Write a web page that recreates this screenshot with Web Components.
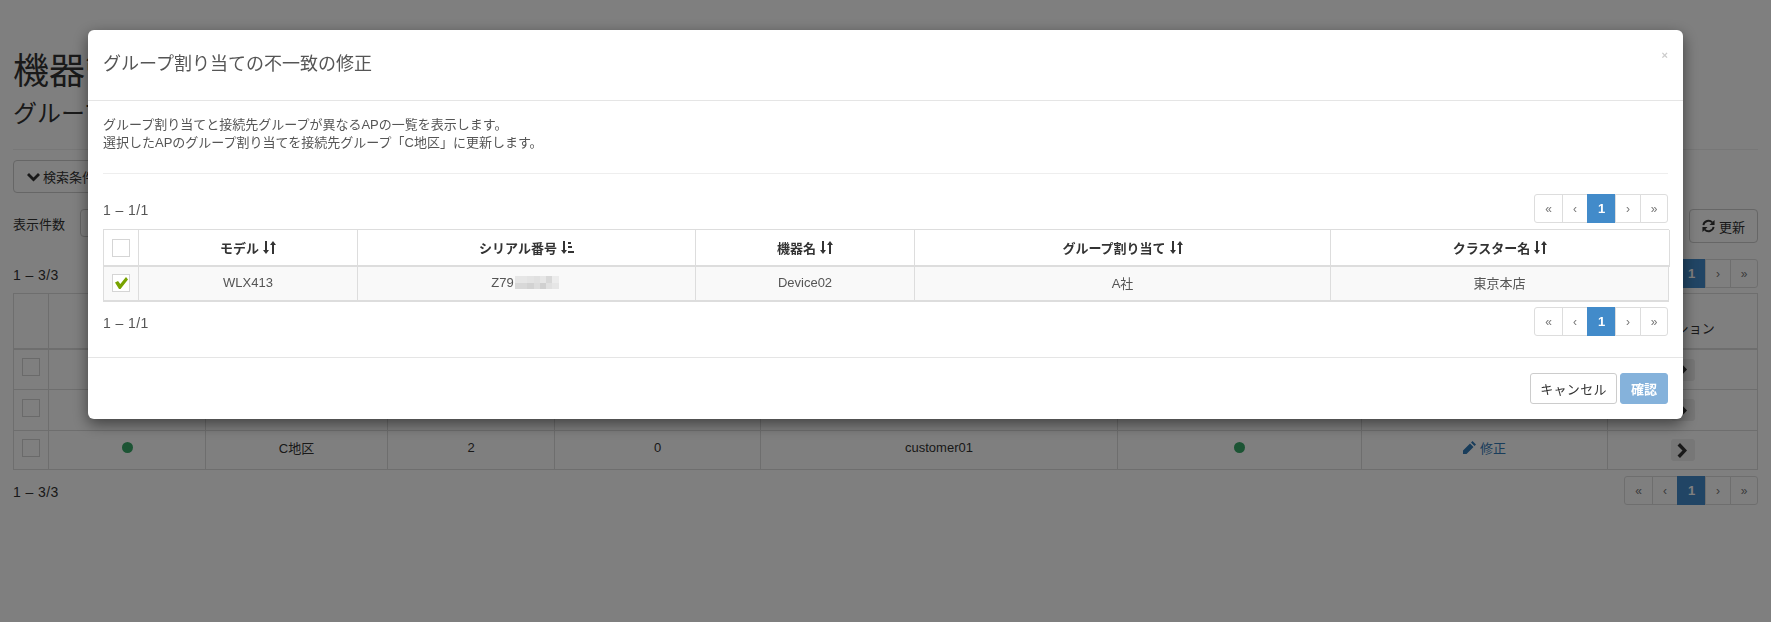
<!DOCTYPE html>
<html lang="ja">
<head>
<meta charset="utf-8">
<title>機器</title>
<style>
    html, body { margin: 0; padding: 0; background: #fff; height: 100%; overflow: hidden; }
    body { font-family: "Liberation Sans", "Noto Sans CJK JP", sans-serif; font-size: 13px; color: #333; }
</style>
</head>
<body>
<device-page></device-page>
<fix-modal></fix-modal>

<script>
const SORT_ICON = `<svg width="13" height="13" viewBox="0 0 13 13" fill="#333"><path d="M2 0h2v9h2l-3 4-3-4h2z"/><path d="M9 13h2V4h2l-3-4-3 4h2z"/></svg>`;
const SORT_ASC_ICON = `<svg width="13" height="13" viewBox="0 0 13 13" fill="#333"><path d="M2 0h2v9h2l-3 4-3-4h2z"/><path d="M7 1h3v2H7zM7 5h4v2H7zM7 10h6v2H7z"/></svg>`;
const CHEVRON_DOWN = `<svg width="13" height="10" viewBox="0 0 13 10" fill="#333"><path d="M0 3l2-2 4.500 4.500L11 1l2 2-6.500 6.500z"/></svg>`;
const CHEVRON_RIGHT = `<svg width="11" height="15" viewBox="0 0 11 15" fill="#333"><path d="M3 0l7 7.500-7 7.500-2.500-2.500 5-5-5-5z"/></svg>`;
const PENCIL = `<svg width="13" height="13" viewBox="0 0 13 13" fill="#337ab7"><path d="M9.500 0L13 3.500 11.500 5 8 1.500zM7 2.500L10.500 6 3.500 13H0V9.500z"/></svg>`;
const REFRESH = `<svg width="13" height="14" viewBox="0 0 14 14" fill="none" stroke="#333" stroke-width="2"><path d="M1.500 6A5.500 5.500 0 0 1 11 3.200"/><path d="M12.500 8A5.500 5.500 0 0 1 3 10.800"/><path d="M13.500 0.500v5.500h-5.500z" fill="#333" stroke="none"/><path d="M0.500 13.500v-5.500h5.500z" fill="#333" stroke="none"/></svg>`;

// greys of the blurred part of the serial number
const MOSAIC = ["e6", "e6", "e3", "e0", "e6", "d8", "ec", "d8", "d8", "d2", "dc", "d0", "e0", "e6"];

class PagerBar extends HTMLElement {
    connectedCallback() {
        const shadow = this.attachShadow({ mode: "open" });
        shadow.innerHTML = `
            <style>
                :host { display: inline-flex; height: 29px; }
                span { display: flex; align-items: center; justify-content: center; box-sizing: border-box; background: #fff; border: 1px solid #ddd; margin-left: -1px; color: #777; font-size: 12px; }
                .first { width: 29px; margin-left: 0; border-radius: 3px 0 0 3px; }
                .prev, .next { width: 26px; }
                .cur { width: 29px; background: #428bca; border-color: #428bca; color: #fff; font-weight: bold; font-size: 13px; }
                .last { width: 28px; border-radius: 0 3px 3px 0; }
            </style>
            <span class="first">«</span><span class="prev">‹</span><span class="cur">1</span><span class="next">›</span><span class="last">»</span>
        `;
    }
}

class TickBox extends HTMLElement {
    connectedCallback() {
        const shadow = this.attachShadow({ mode: "open" });
        const tick = this.hasAttribute("checked")
            ? `<svg width="13" height="12" viewBox="0 0 13 12"><path d="M0 5.500L3 4l2.300 3L11 0l2 2.500L5.500 12h-1.500z" fill="#78a300"/></svg>`
            : "";
        shadow.innerHTML = `
            <style>
                :host { display: inline-flex; align-items: center; justify-content: center; box-sizing: border-box; width: 18px; height: 18px; border: 1px solid #d5d5d5; background: #fff; vertical-align: middle; }
            </style>
            ${tick}
        `;
    }
}

class DevicePage extends HTMLElement {
    connectedCallback() {
        const shadow = this.attachShadow({ mode: "open" });
        const cols = "35px 157px 182px 167px 206px 357px 244px 246px 1fr";
        const dot = `<i class="dot"></i>`;
        const row = (name, count) => `
            <div class="c"><tick-box></tick-box></div><div class="c">${dot}</div><div class="c">${name}</div><div class="c">${count}</div><div class="c">0</div><div class="c">customer01</div><div class="c">${dot}</div><div class="c"><span class="link">${PENCIL}修正</span></div><div><span class="open">${CHEVRON_RIGHT}</span></div>
        `;
        shadow.innerHTML = `
            <style>
                :host { display: block; padding: 52px 13px 0 13px; color: #333; }
                h1 { font-size: 36px; font-weight: 400; line-height: 40px; margin: 0; }
                h2 { font-size: 24px; font-weight: 400; line-height: 30px; margin: 7px 0 0; }
                hr { border: 0; border-top: 1px solid #eee; margin: 20px 0 10px; }
                .search { display: inline-flex; align-items: center; gap: 3px; box-sizing: border-box; height: 33px; padding: 0 13px; border: 1px solid #ccc; border-radius: 4px; vertical-align: top; }
                .tools { display: flex; align-items: flex-start; justify-content: space-between; height: 34px; margin-top: 16px; }
                .tools .left { display: flex; align-items: center; gap: 15px; height: 28px; }
                .select { width: 80px; height: 28px; border: 1px solid #ccc; border-radius: 4px; box-sizing: border-box; }
                .update { display: inline-flex; align-items: center; gap: 4px; box-sizing: border-box; height: 34px; padding: 0 12px; border: 1px solid #ccc; border-radius: 4px; }
                .pagerow { display: flex; align-items: center; justify-content: space-between; }
                .count { font-size: 14px; letter-spacing: .4px; padding-top: 3px; }
                .pagerow.top { margin-top: 16px; }
                .pagerow.bottom { margin-top: 6px; }
                .table { display: grid; grid-template-columns: ${cols}; grid-template-rows: 56px 40px 41px 39px; border: 1px solid #ddd; border-bottom: 0; margin-top: 5px; text-align: center; }
                .table > div { display: flex; align-items: center; justify-content: center; box-sizing: border-box; border-right: 1px solid #ddd; border-bottom: 1px solid #ddd; }
                .table > div:nth-child(9n) { border-right: 0; }
                .table > .th { align-items: flex-end; padding-bottom: 11px; border-bottom-width: 2px; }
                .table > .c { padding-bottom: 5px; }
                .dot { display: block; width: 11px; height: 11px; border-radius: 50%; background: #38a868; }
                .link { color: #337ab7; display: inline-flex; gap: 4px; align-items: center; }
                .open { display: flex; align-items: center; justify-content: center; width: 24px; height: 22px; background: #eee; border-radius: 3px; }
            </style>
            <h1>機器管理</h1>
            <h2>グループ</h2>
            <hr>
            <div class="search">${CHEVRON_DOWN}検索条件</div>
            <div class="tools">
                <div class="left"><span>表示件数</span><div class="select"></div></div>
                <div class="update">${REFRESH}更新</div>
            </div>
            <div class="pagerow top"><span class="count">1 – 3/3</span><pager-bar></pager-bar></div>
            <div class="table">
                <div class="th"></div><div class="th"></div><div class="th"></div><div class="th"></div><div class="th"></div><div class="th"></div><div class="th"></div><div class="th"></div><div class="th">アクション</div>
                ${row("A地区", 1)}
                ${row("B地区", 1)}
                ${row("C地区", 2)}
            </div>
            <div class="pagerow bottom"><span class="count">1 – 3/3</span><pager-bar></pager-bar></div>
        `;
    }
}

class FixModal extends HTMLElement {
    connectedCallback() {
        const shadow = this.attachShadow({ mode: "open" });
        const mosaic = MOSAIC.map((g) => `<i style="background:#${g}${g}${g}"></i>`).join("");
        shadow.innerHTML = `
            <style>
                :host { display: block; position: fixed; inset: 0; background: rgba(0,0,0,.5); }
                .dialog { position: relative; margin: 30px 88px 0; background: #fff; border-radius: 6px; box-shadow: 0 5px 15px rgba(0,0,0,.5); color: #555; font-size: 13px; }
                header { height: 71px; box-sizing: border-box; padding: 0 15px; border-bottom: 1px solid #e5e5e5; display: flex; align-items: center; }
                header h4 { margin: 0 0 6px; font-size: 18px; font-weight: 400; color: #555; }
                .close { position: absolute; right: 15px; top: 19px; color: #ccc; font-size: 11px; font-weight: bold; }
                .body { padding: 15px; }
                .body p { margin: 0; line-height: 18px; }
                hr { border: 0; border-top: 1px solid #eee; margin: 21px 0 20px; }
                .row { display: flex; align-items: center; justify-content: space-between; }
                .count { font-size: 14px; letter-spacing: .4px; padding-top: 3px; }
                .table { display: grid; grid-template-columns: 35px 219px 338px 219px 416px 339px; margin-top: 6px; border-top: 1px solid #ddd; border-left: 1px solid #ddd; text-align: center; width: 1566px; box-sizing: border-box; }
                .table > div { display: flex; align-items: center; justify-content: center; gap: 4px; box-sizing: border-box; border-right: 1px solid #ddd; }
                .th { height: 37px; border-bottom: 2px solid #ddd; color: #333; font-weight: bold; }
                .td { height: 35px; padding-bottom: 2px; background: #f9f9f9; border-bottom: 2px solid #ddd; color: #555; }
                .td.end { margin-right: 1px; }
                .serial { display: flex; align-items: center; gap: 1px; padding-right: 3px; }
                .mosaic { display: inline-grid; grid-template-columns: repeat(7, 6.300px); grid-template-rows: repeat(2, 6.500px); }
                .row.after { margin-top: 5px; }
                footer { height: 62px; box-sizing: border-box; border-top: 1px solid #e5e5e5; padding: 15px; display: flex; justify-content: flex-end; gap: 3px; margin-top: 6px; }
                button { font: inherit; height: 31px; border-radius: 3px; padding: 0; }
                .cancel { width: 87px; border: 1px solid #ccc; background: #fff; color: #333; letter-spacing: .3px; }
                .ok { width: 48px; border: 1px solid #85b2db; background: #85b2db; color: #fff; font-weight: bold; }
            </style>
            <div class="dialog">
                <header><h4>グループ割り当ての不一致の修正</h4><span class="close">×</span></header>
                <div class="body">
                    <p>グループ割り当てと接続先グループが異なるAPの一覧を表示します。<br>選択したAPのグループ割り当てを接続先グループ「C地区」に更新します。</p>
                    <hr>
                    <div class="row"><span class="count">1 – 1/1</span><pager-bar></pager-bar></div>
                    <div class="table">
                        <div class="th"><tick-box></tick-box></div>
                        <div class="th">モデル ${SORT_ICON}</div>
                        <div class="th">シリアル番号 ${SORT_ASC_ICON}</div>
                        <div class="th">機器名 ${SORT_ICON}</div>
                        <div class="th">グループ割り当て ${SORT_ICON}</div>
                        <div class="th">クラスター名 ${SORT_ICON}</div>
                        <div class="td"><tick-box checked></tick-box></div>
                        <div class="td">WLX413</div>
                        <div class="td"><span class="serial">Z79<span class="mosaic">${mosaic}</span></span></div>
                        <div class="td">Device02</div>
                        <div class="td">A社</div>
                        <div class="td end">東京本店</div>
                    </div>
                    <div class="row after"><span class="count">1 – 1/1</span><pager-bar></pager-bar></div>
                </div>
                <footer><button class="cancel">キャンセル</button><button class="ok">確認</button></footer>
            </div>
        `;
    }
}

customElements.define("pager-bar", PagerBar);
customElements.define("tick-box", TickBox);
customElements.define("device-page", DevicePage);
customElements.define("fix-modal", FixModal);
</script>
</body>
</html>
